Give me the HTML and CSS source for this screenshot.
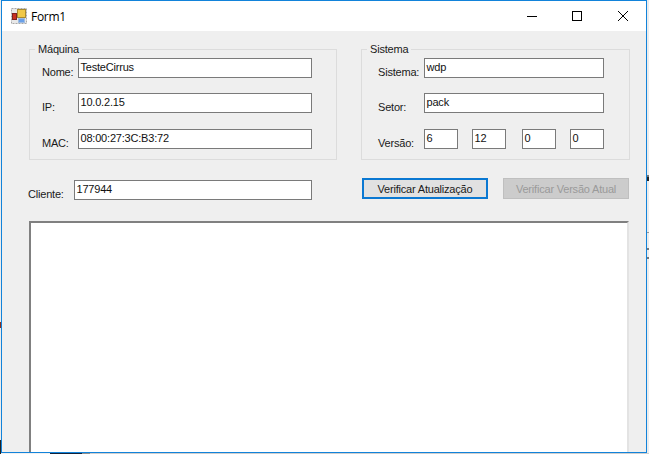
FILE: index.html
```html
<!DOCTYPE html>
<html lang="pt">
<head>
<meta charset="utf-8">
<title>Form1</title>
<link rel="stylesheet" href="styles.css">
</head>
<body>
<div class="window">
  <header class="titlebar">
    <svg class="appicon" width="16" height="16" viewBox="0 0 16 16">
      <rect x="0.5" y="0.5" width="15" height="15" fill="#e8e8e8" stroke="#a8a8a8" stroke-dasharray="2 1"/>
      <rect x="6.5" y="1.5" width="8" height="8" fill="#f0c848" stroke="#a88a30"/>
      <rect x="1.5" y="5.5" width="4" height="6" fill="#c83020" stroke="#802020"/>
      <rect x="7.5" y="10.5" width="6" height="4" fill="#6aa0e8" stroke="#a0bce0"/>
    </svg>
    <span class="title">Form1</span>
    <div class="controls">
      <svg class="ctl" width="46" height="30" viewBox="0 0 46 30"><path d="M19 15.5h10" stroke="#000" fill="none"/></svg>
      <svg class="ctl" width="46" height="30" viewBox="0 0 46 30"><rect x="18.5" y="10.5" width="9" height="9" stroke="#000" fill="none"/></svg>
      <svg class="ctl" width="46" height="30" viewBox="0 0 46 30"><path d="M18 10l10 10M28 10L18 20" stroke="#000" fill="none"/></svg>
    </div>
  </header>
  <main class="client">
    <div class="groups">
      <section class="group group-maquina">
        <span class="legend">Máquina</span>
        <div class="row"><label class="lbl">Nome:</label><div class="input">TesteCirrus</div></div>
        <div class="row"><label class="lbl">IP:</label><div class="input">10.0.2.15</div></div>
        <div class="row"><label class="lbl">MAC:</label><div class="input">08:00:27:3C:B3:72</div></div>
      </section>
      <section class="group group-sistema">
        <span class="legend">Sistema</span>
        <div class="row"><label class="lbl">Sistema:</label><div class="input">wdp</div></div>
        <div class="row"><label class="lbl">Setor:</label><div class="input">pack</div></div>
        <div class="row"><label class="lbl">Versão:</label>
          <div class="versions">
            <div class="input v">6</div><div class="input v">12</div><div class="input v v-third">0</div><div class="input v">0</div>
          </div>
        </div>
      </section>
    </div>
    <div class="actions">
      <div class="cliente"><label class="lbl">Cliente:</label><div class="input">177944</div></div>
      <button class="btn btn-primary">Verificar Atualização</button>
      <button class="btn btn-disabled" disabled>Verificar Versão Atual</button>
    </div>
    <div class="output"></div>
  </main>
</div>
</body>
</html>
```
FILE: styles.css
```css
* { box-sizing: border-box; }
html, body { margin: 0; height: 100%; overflow: hidden; }
body {
  background:
    linear-gradient(to bottom, transparent 175px, #777 175px 177px, #222 177px 181px, transparent 181px 232px, #999 232px 233px, transparent 233px 248px, #777 248px 250px, transparent 250px 257px, #777 257px 259px, transparent 259px) right top / 2px 100% no-repeat,
    linear-gradient(to bottom, transparent 322px, #8a3020 322px 328px, transparent 328px 440px, #222 440px) left top / 1px 100% no-repeat,
    linear-gradient(to right, #f0f0f0 0 50px, #12233a 50px 82px, #8e8e8e 82px 90px, #cfcfcf 90px) left bottom / 100% 1px no-repeat,
    #ececec;
  font-family: "Liberation Sans", Arial, sans-serif;
  font-size: 11px;
  letter-spacing: -0.2px;
  color: #1a1a1a;
}
.window {
  margin-left: 1px;
  width: 646px;
  height: 453px;
  border: 1px solid #1283da;
  background: #efefef;
  display: flex;
  flex-direction: column;
  overflow: hidden;
}
.titlebar {
  height: 30px;
  flex: none;
  background: #fff;
  display: flex;
  align-items: center;
  padding-left: 9px;
}
.appicon { flex: none; }
.title {
  margin-left: 4px;
  font-family: "Open Sans", sans-serif;
  font-size: 12px;
  letter-spacing: -0.3px;
  color: #000;
}
.controls { margin-left: auto; display: flex; }
.ctl { display: block; }
.client { flex: 1; min-height: 0; padding: 18px 16px 0 26px; display: flex; flex-direction: column; }
.groups { display: flex; gap: 24px; margin-left: 1px; }
.group {
  position: relative;
  height: 111px;
  border: 1px solid #dcdcdc;
  display: flex;
  flex-direction: column;
  padding-top: 8px;
  gap: 15px;
}
.group-maquina { width: 308px; }
.group-sistema { width: 269px; }
.legend {
  position: absolute;
  left: 5px;
  top: -7px;
  padding: 0 3px;
  background: #efefef;
  line-height: 13px;
}
.row { display: flex; height: 20px; }
.row:nth-child(3) { margin-bottom: 1px; }
.lbl { display: block; line-height: 13px; padding-top: 8px; }
.group-maquina .lbl { margin-left: 12px; width: 36px; }
.group-sistema .lbl { margin-left: 16px; width: 46px; }
.input {
  height: 20px;
  background: #fff;
  border: 1px solid #7a7a7a;
  padding: 1px 0 0 1.5px;
  line-height: 15px;
  color: #111;
  flex: none;
}
.group-maquina .input { width: 234px; }
.group-sistema .input { width: 180px; }
.versions { display: flex; width: 180px; gap: 14px; }
.group-sistema .input.v { width: 34px; }
.group-sistema .input.v-third { margin-left: 2px; }
.actions { display: flex; align-items: flex-start; margin-top: 18px; height: 43px; }
.cliente { display: flex; width: 284px; margin-top: 2px; }
.cliente .lbl { width: 46px; }
.cliente .input { width: 238px; }
.btn {
  width: 126px;
  height: 21px;
  padding: 1px 0 0;
  font: inherit;
  letter-spacing: inherit;
  text-align: center;
  line-height: 15px;
}
.btn-primary { margin-left: 50px; border: 2px solid #0a78d2; background: #e1e1e1; color: #1a1a1a; }
.btn-disabled { margin-left: 15px; border: 1px solid #bfbfbf; background: #cccccc; color: #9a9a9a; }
.output {
  flex: 1;
  min-height: 0;
  width: 600px;
  margin-left: 1px;
  background: #fff;
  border-style: solid;
  border-width: 2px 2px 0 2px;
  border-color: #808080 #e3e3e3 #e3e3e3 #808080;
}
```
